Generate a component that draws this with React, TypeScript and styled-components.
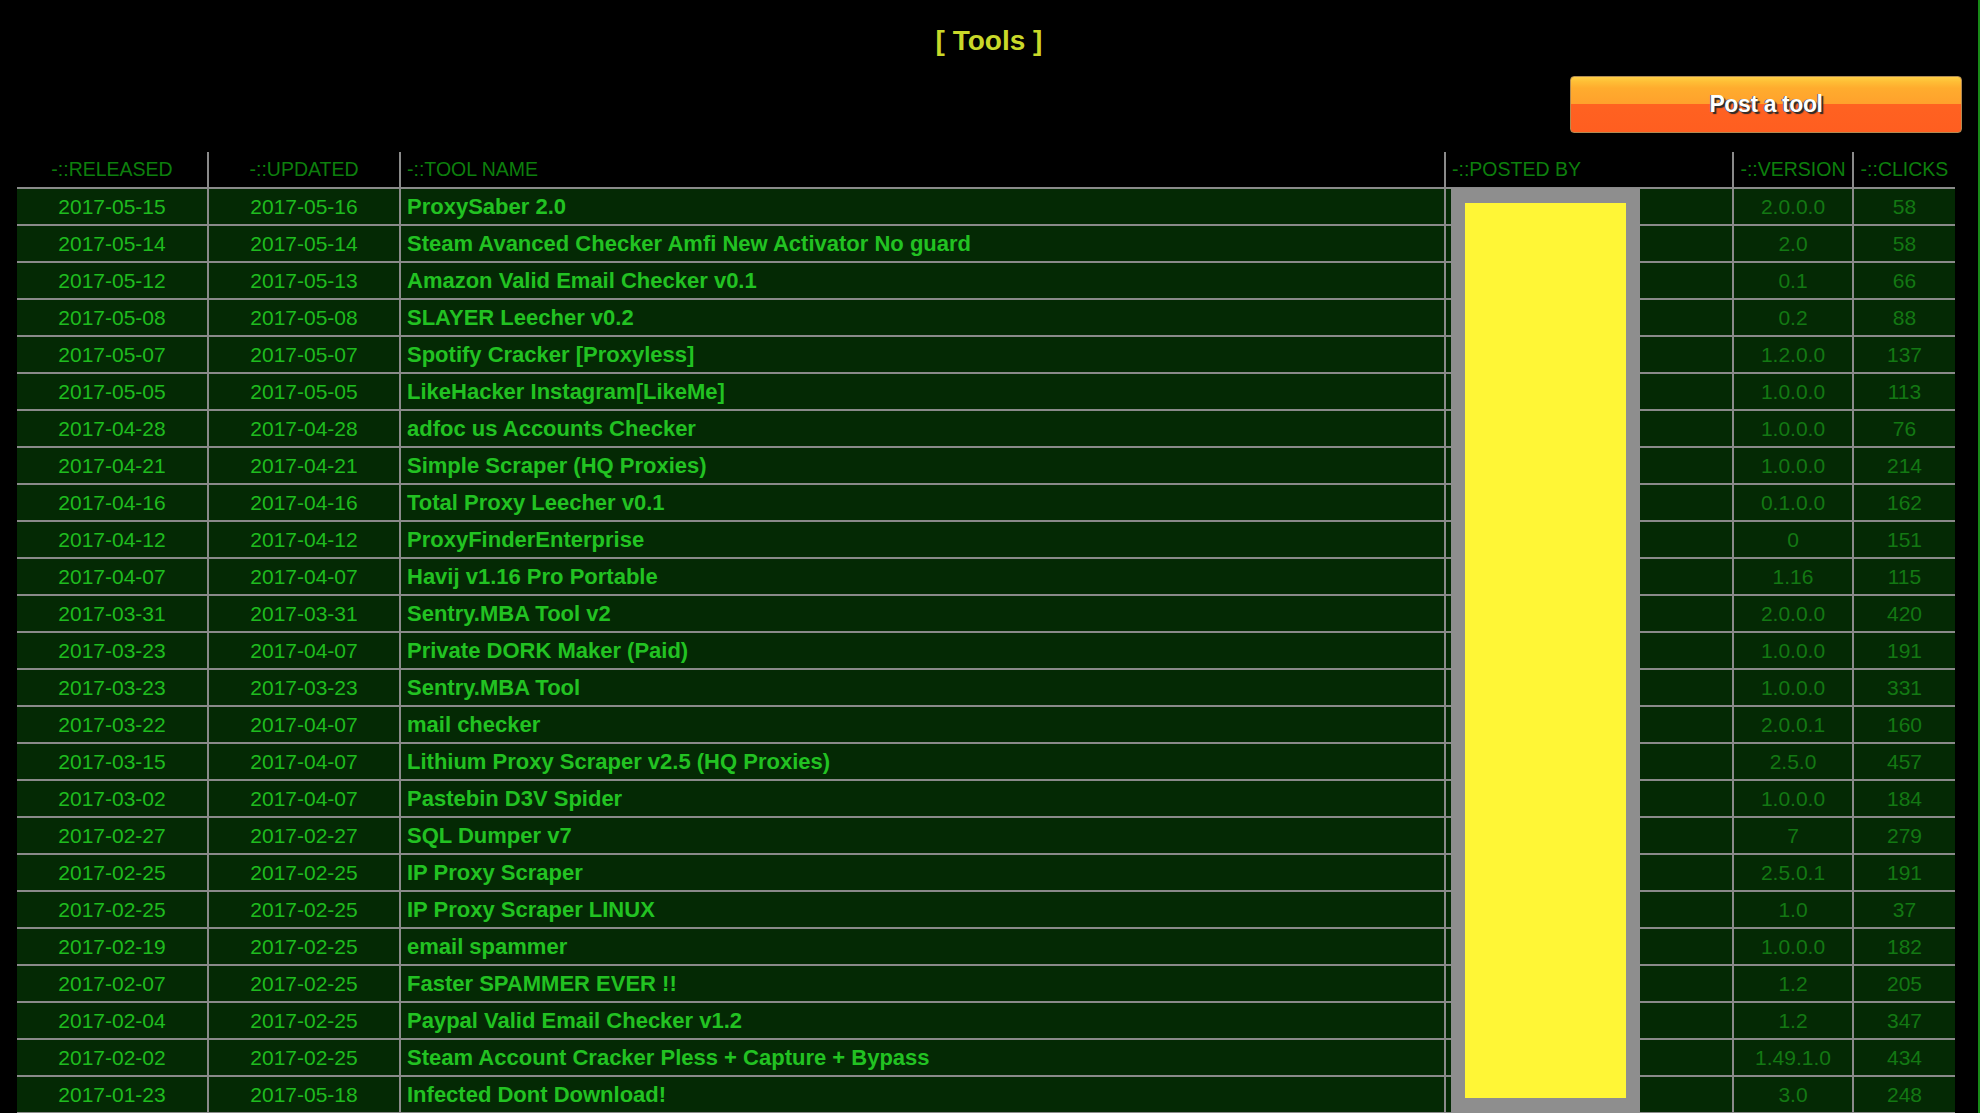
import React from "react";
import styled, { createGlobalStyle } from "styled-components";

const GlobalStyle = createGlobalStyle`
  html, body {
    margin: 0;
    padding: 0;
    background: #000;
    overflow: hidden;
  }
  body {
    font-family: "Liberation Sans", Arial, sans-serif;
  }
`;

const Page = styled.div`
  box-sizing: border-box;
  width: 1980px;
  min-height: 100vh;
  background: #000;
  border-right: 2px solid #178a17;
  padding: 27px 0 0 17px;
  display: flex;
  flex-direction: column;
`;

const Title = styled.h1`
  margin: 0;
  padding-right: 17px;
  font-size: 28px;
  line-height: 27px;
  font-weight: bold;
  color: #c9d829;
  text-align: center;
`;

const ButtonRow = styled.div`
  display: flex;
  justify-content: flex-end;
  padding-right: 16px;
  margin-top: 22px;
`;

const PostButton = styled.button`
  box-sizing: border-box;
  width: 392px;
  height: 57px;
  border: 1px solid #b08a52;
  border-radius: 4px;
  background: linear-gradient(
    to bottom,
    #ffd046 0%,
    #ffbf36 8%,
    #ffac2e 20%,
    #ffa12c 49%,
    #ff6221 50%,
    #ff5e20 100%
  );
  color: #fff;
  font-family: "Liberation Sans", Arial, sans-serif;
  font-size: 23px;
  font-weight: bold;
  letter-spacing: -0.4px;
  text-shadow: 2px 2px 1px #2a2a2a, -1px 0 0 #555;
  cursor: pointer;
  padding: 0;
`;

const Table = styled.div`
  position: relative;
  margin-top: 19px;
  width: 1938px;
  display: grid;
  row-gap: 2px;
  background: #8a8a8a;
  padding-bottom: 2px;
`;

const Row = styled.div`
  display: grid;
  grid-template-columns: 190px 190px 1043px 286px 118px 101px;
  column-gap: 2px;
  height: 35px;
`;

type Align = "center" | "left";

const HeadCell = styled.div<{ $align: Align }>`
  background: #000;
  display: flex;
  align-items: center;
  justify-content: ${(p) => (p.$align === "center" ? "center" : "flex-start")};
  padding-left: ${(p) => (p.$align === "left" ? "6px" : "0")};
  color: #0d7f0d;
  font-size: 19.5px;
  white-space: nowrap;
  overflow: hidden;
`;

const Cell = styled.div<{ $align: Align; $tone: "bright" | "dim"; $bold?: boolean }>`
  background: #042904;
  display: flex;
  align-items: center;
  justify-content: ${(p) => (p.$align === "center" ? "center" : "flex-start")};
  padding-left: ${(p) => (p.$align === "left" ? "6px" : "0")};
  color: ${(p) => (p.$tone === "bright" ? "#1fbc1f" : "#137813")};
  font-size: ${(p) => (p.$bold ? "22px" : "21px")};
  font-weight: ${(p) => (p.$bold ? "bold" : "normal")};
  white-space: nowrap;
  overflow: hidden;
`;

const NameLink = styled.a`
  color: #22c222;
  text-decoration: none;
`;

const AdFrame = styled.div`
  position: absolute;
  left: 1434px;
  top: 36px;
  box-sizing: border-box;
  width: 189px;
  height: 925px;
  padding: 15px 14px;
  background: #8e8e8e;
`;

const AdFill = styled.div`
  width: 100%;
  height: 100%;
  background: #fff636;
`;

type Tool = [string, string, string, string, number];

const tools: Tool[] = [
  ["2017-05-15", "2017-05-16", "ProxySaber 2.0", "2.0.0.0", 58],
  ["2017-05-14", "2017-05-14", "Steam Avanced Checker Amfi New Activator No guard", "2.0", 58],
  ["2017-05-12", "2017-05-13", "Amazon Valid Email Checker v0.1", "0.1", 66],
  ["2017-05-08", "2017-05-08", "SLAYER Leecher v0.2", "0.2", 88],
  ["2017-05-07", "2017-05-07", "Spotify Cracker [Proxyless]", "1.2.0.0", 137],
  ["2017-05-05", "2017-05-05", "LikeHacker Instagram[LikeMe]", "1.0.0.0", 113],
  ["2017-04-28", "2017-04-28", "adfoc us Accounts Checker", "1.0.0.0", 76],
  ["2017-04-21", "2017-04-21", "Simple Scraper (HQ Proxies)", "1.0.0.0", 214],
  ["2017-04-16", "2017-04-16", "Total Proxy Leecher v0.1", "0.1.0.0", 162],
  ["2017-04-12", "2017-04-12", "ProxyFinderEnterprise", "0", 151],
  ["2017-04-07", "2017-04-07", "Havij v1.16 Pro Portable", "1.16", 115],
  ["2017-03-31", "2017-03-31", "Sentry.MBA Tool v2", "2.0.0.0", 420],
  ["2017-03-23", "2017-04-07", "Private DORK Maker (Paid)", "1.0.0.0", 191],
  ["2017-03-23", "2017-03-23", "Sentry.MBA Tool", "1.0.0.0", 331],
  ["2017-03-22", "2017-04-07", "mail checker", "2.0.0.1", 160],
  ["2017-03-15", "2017-04-07", "Lithium Proxy Scraper v2.5 (HQ Proxies)", "2.5.0", 457],
  ["2017-03-02", "2017-04-07", "Pastebin D3V Spider", "1.0.0.0", 184],
  ["2017-02-27", "2017-02-27", "SQL Dumper v7", "7", 279],
  ["2017-02-25", "2017-02-25", "IP Proxy Scraper", "2.5.0.1", 191],
  ["2017-02-25", "2017-02-25", "IP Proxy Scraper LINUX", "1.0", 37],
  ["2017-02-19", "2017-02-25", "email spammer", "1.0.0.0", 182],
  ["2017-02-07", "2017-02-25", "Faster SPAMMER EVER !!", "1.2", 205],
  ["2017-02-04", "2017-02-25", "Paypal Valid Email Checker v1.2", "1.2", 347],
  ["2017-02-02", "2017-02-25", "Steam Account Cracker Pless + Capture + Bypass", "1.49.1.0", 434],
  ["2017-01-23", "2017-05-18", "Infected Dont Download!", "3.0", 248],
];

export default function App() {
  return (
    <>
      <GlobalStyle />
      <Page>
        <Title>[ Tools ]</Title>
        <ButtonRow>
          <PostButton type="button">Post a tool</PostButton>
        </ButtonRow>
        <Table>
          <Row>
            <HeadCell $align="center">-::RELEASED</HeadCell>
            <HeadCell $align="center">-::UPDATED</HeadCell>
            <HeadCell $align="left">-::TOOL NAME</HeadCell>
            <HeadCell $align="left">-::POSTED BY</HeadCell>
            <HeadCell $align="center">-::VERSION</HeadCell>
            <HeadCell $align="center">-::CLICKS</HeadCell>
          </Row>
          {tools.map(([rel, upd, name, ver, clicks], i) => (
            <Row key={i}>
              <Cell $align="center" $tone="bright">{rel}</Cell>
              <Cell $align="center" $tone="bright">{upd}</Cell>
              <Cell $align="left" $tone="bright" $bold>
                <NameLink href="#">{name}</NameLink>
              </Cell>
              <Cell $align="left" $tone="dim" />
              <Cell $align="center" $tone="dim">{ver}</Cell>
              <Cell $align="center" $tone="dim">{clicks}</Cell>
            </Row>
          ))}
          <AdFrame>
            <AdFill />
          </AdFrame>
        </Table>
      </Page>
    </>
  );
}
